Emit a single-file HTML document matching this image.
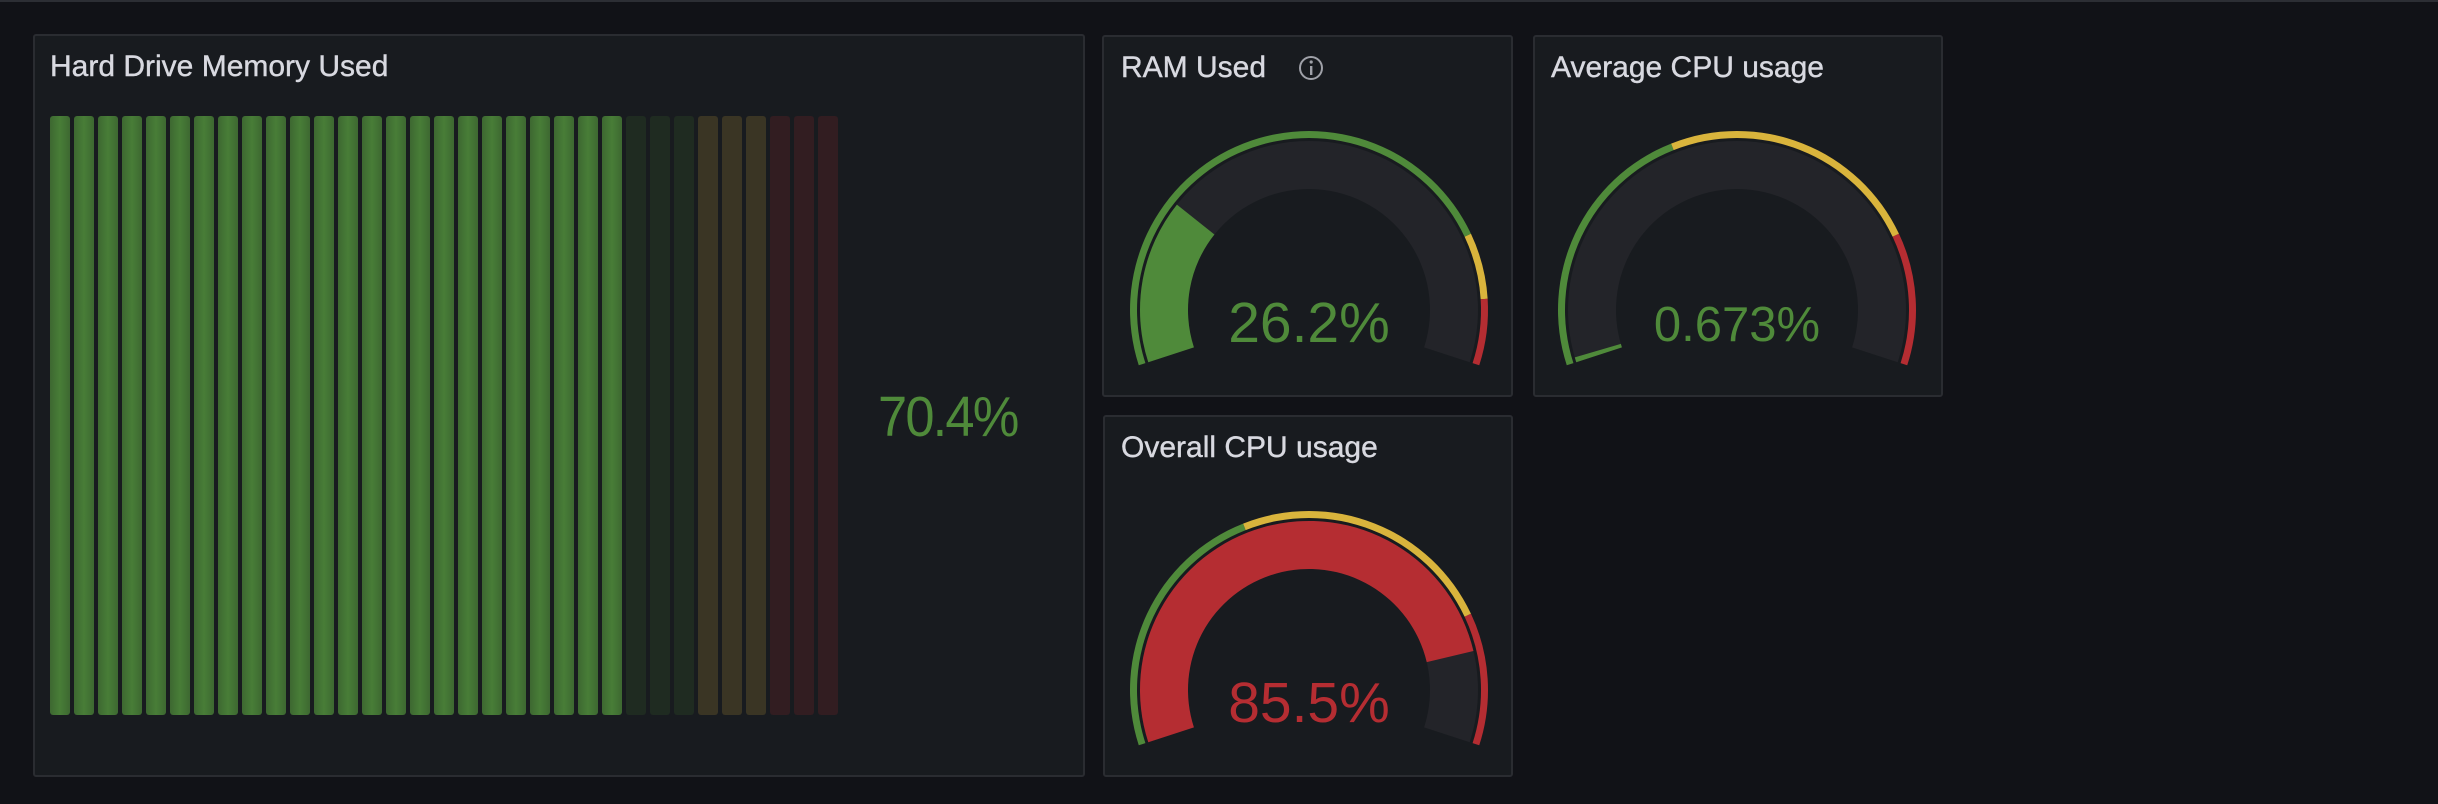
<!DOCTYPE html>
<html><head><meta charset="utf-8"><style>
html,body{margin:0;padding:0;background:#111217;width:2438px;height:804px;overflow:hidden;font-family:"Liberation Sans",sans-serif;}
.top{position:absolute;left:0;top:0;width:2438px;height:2px;background:#2c2e34}
.p{position:absolute;background:#181b1f;border:2px solid #2a2c31;border-radius:3px;box-sizing:border-box}
.t{position:absolute;color:#d8d9e0;font-size:30px;white-space:nowrap;-webkit-text-stroke:0.4px #d8d9e0}
.bar{position:absolute;top:116px;width:20px;height:599px;border-radius:3px}
svg{position:absolute;left:0;top:0}
.v{position:absolute;font-size:56px;white-space:nowrap;text-align:center}
</style></head><body>
<div class="top"></div>
<div class="p" style="left:33px;top:34px;width:1052px;height:743px"></div>
<div class="t" style="left:50px;top:50px;">Hard Drive Memory Used</div>
<div id="bars"></div>
<div class="v" style="left:878px;top:384px;color:#4f8a3a;font-size:57px;letter-spacing:-2px;transform:scaleX(0.92);transform-origin:left">70.4%</div>

<div class="p" style="left:1102px;top:35px;width:411px;height:362px"></div>
<div class="t" style="left:1121px;top:51px;">RAM Used</div>
<svg width="2438" height="804" style="pointer-events:none"><circle cx="1311" cy="68" r="11" fill="none" stroke="#9fa1a8" stroke-width="2"/><rect x="1310" y="66" width="2.4" height="9" fill="#9fa1a8"/><circle cx="1311.2" cy="62" r="1.6" fill="#9fa1a8"/></svg>

<div class="p" style="left:1533px;top:35px;width:410px;height:362px"></div>
<div class="t" style="left:1551px;top:51px;">Average CPU usage</div>

<div class="p" style="left:1103px;top:415px;width:410px;height:362px"></div>
<div class="t" style="left:1121px;top:431px;">Overall CPU usage</div>

<svg id="g" width="2438" height="804"></svg>

<div class="v" style="left:1109px;width:400px;top:290px;color:#4f8a3a;font-size:57px">26.2%</div>
<div class="v" style="left:1537px;width:400px;top:297px;color:#4f8a3a;font-size:49px">0.673%</div>
<div class="v" style="left:1109px;width:400px;top:670px;color:#b52d32;font-size:57px">85.5%</div>

<script>
var b=document.getElementById('bars'),h='';
for(var i=0;i<33;i++){var c=i<24?'linear-gradient(90deg,#3d6831,#487d37 50%,#3d6831)':i<27?'#1f2b21':i<30?'#3a3524':'#321d21';
h+='<div class="bar" style="left:'+(50+i*24)+'px;background:'+c+'"></div>';}
b.innerHTML=h;
function P(cx,cy,r1,r2,a1,a2){var R=Math.PI/180;function pt(r,a){return (cx+r*Math.cos(a*R)).toFixed(2)+','+(cy-r*Math.sin(a*R)).toFixed(2)}
var lg=(a1-a2)>180?1:0;
return 'M'+pt(r2,a1)+' A'+r2+','+r2+' 0 '+lg+' 1 '+pt(r2,a2)+' L'+pt(r1,a2)+' A'+r1+','+r1+' 0 '+lg+' 0 '+pt(r1,a1)+'Z';}
function ang(f){return 198-216*f}
var G='#4f8a3a',Y='#d9b43c',Rd='#b52d32',s='';
function gauge(cx,cy,val,th,fc){
 s+='<path d="'+P(cx,cy,121,169,ang(0),ang(1))+'" fill="#232429"/>';
 if(val>0)s+='<path d="'+P(cx,cy,121,169,ang(0),ang(Math.max(val,0.008)))+'" fill="'+fc+'"/>';
 var cols=[G,Y,Rd],st=0;for(var k=0;k<3;k++){var en=k<2?th[k]:1;s+='<path d="'+P(cx,cy,172,179,ang(st),ang(en))+'" fill="'+cols[k]+'"/>';st=en;}
}
gauge(1309,310,0.262,[0.8,0.9],G);
gauge(1737,310,0.00673,[0.4,0.8],G);
gauge(1309,690,0.855,[0.4,0.8],Rd);
document.getElementById('g').innerHTML=s;
</script>
</body></html>
